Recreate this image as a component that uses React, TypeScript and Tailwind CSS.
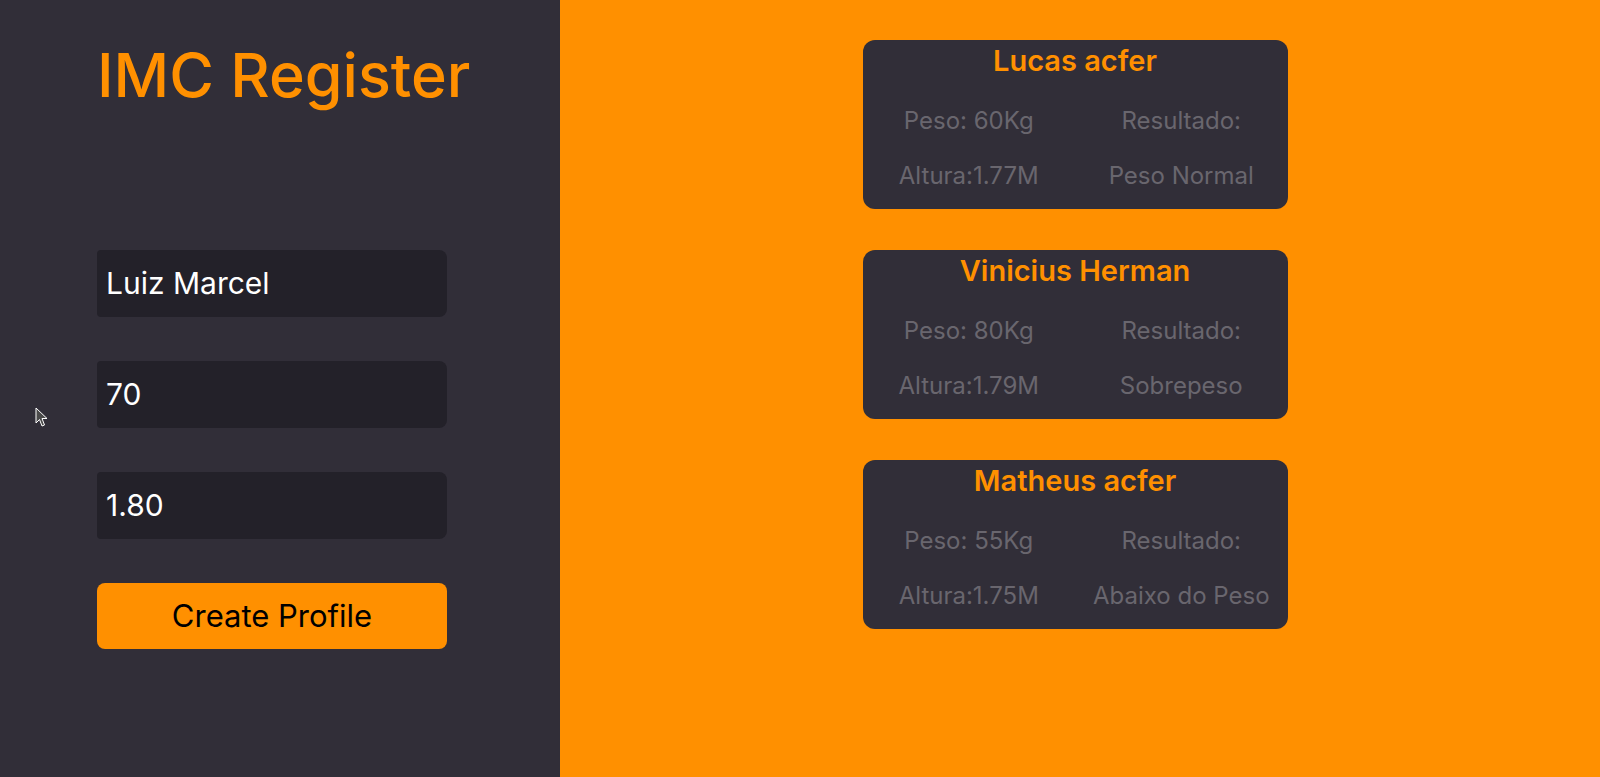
import React from 'react';

type Profile = {
  name: string;
  peso: string;
  altura: string;
  resultado: string;
};

const profiles: Profile[] = [
  { name: 'Lucas acfer', peso: '60', altura: '1.77', resultado: 'Peso Normal' },
  { name: 'Vinicius Herman', peso: '80', altura: '1.79', resultado: 'Sobrepeso' },
  { name: 'Matheus acfer', peso: '55', altura: '1.75', resultado: 'Abaixo do Peso' },
];

const Field: React.FC<{ value: string }> = ({ value }) => (
  <div className="h-[67px] w-[350px] rounded-r-lg rounded-l-sm bg-[#232129] flex items-center pl-[9px] text-[30px] text-white">
    {value}
  </div>
);

const ProfileCard: React.FC<{ p: Profile }> = ({ p }) => (
  <div className="w-[425px] h-[169px] rounded-xl bg-[#312e38] flex flex-col">
    <h2 className="text-center text-[29px] font-semibold text-[#ff9000] leading-none pt-[6px] h-[69px]">
      {p.name}
    </h2>
    <div className="grid grid-cols-2 text-[24px] text-[#69666e] text-center leading-none">
      <span className="h-[55px]">Peso: {p.peso}Kg</span>
      <span className="h-[55px]">Resultado:</span>
      <span>Altura:{p.altura}M</span>
      <span>{p.resultado}</span>
    </div>
  </div>
);

const App: React.FC = () => {
  return (
    <div className="flex h-[777px] w-full font-['Inter','Noto_Sans',sans-serif] relative">
      <div className="w-[560px] bg-[#312e38] flex flex-col pl-[97px] pt-[45px]">
        <h1 className="text-[61px] font-medium text-[#ff9000] leading-none">IMC Register</h1>

        <div className="flex flex-col gap-[44px] mt-[144px]">
          <Field value="Luiz Marcel" />
          <Field value="70" />
          <Field value="1.80" />
          <button className="h-[66px] w-[350px] rounded-lg bg-[#ff9000] text-black text-[31px]">
            Create Profile
          </button>
        </div>
      </div>

      <div className="flex-1 bg-[#ff9000] flex flex-col items-center pt-[40px] gap-[41px] pr-[10px]">
        {profiles.map((p) => (
          <ProfileCard key={p.name} p={p} />
        ))}
      </div>

      <svg className="absolute left-[35px] top-[407px]" width="14" height="21" viewBox="0 0 14 21">
        <path d="M1 1 L1 16 L4.5 12.5 L7 19 L9.5 18 L7 11.5 L12 11.5 Z" fill="#4a4a4a" stroke="#ffffff" strokeWidth="1" />
      </svg>
    </div>
  );
};

export default App;
